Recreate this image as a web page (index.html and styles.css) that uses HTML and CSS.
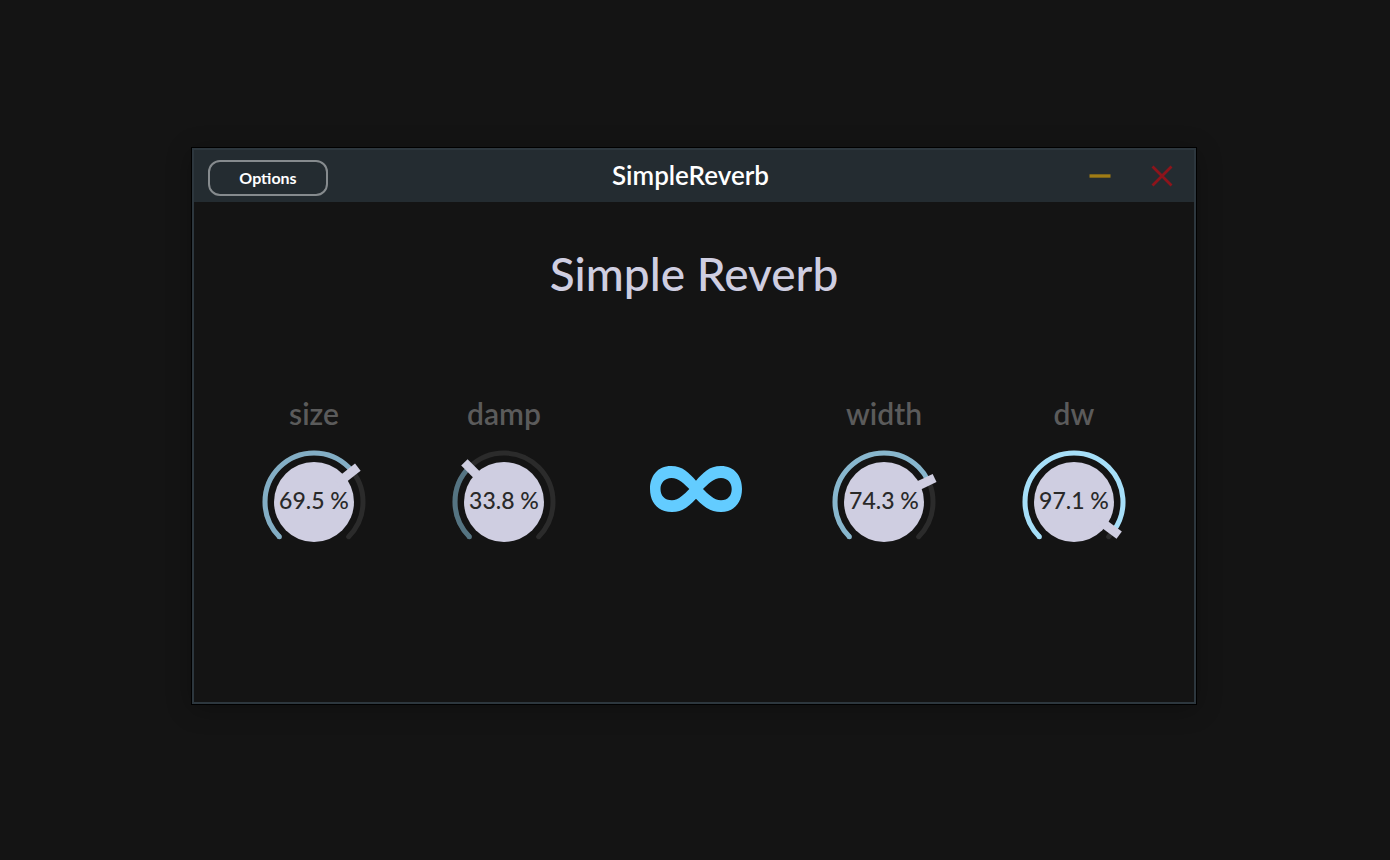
FILE: index.html
```html
<!DOCTYPE html>
<html lang="en">
<head>
<meta charset="utf-8">
<title>SimpleReverb</title>
<link rel="stylesheet" href="styles.css">
</head>
<body>
<main class="window">
  <header class="titlebar">
    <button class="options" type="button">Options</button>
    <h1 class="window-title">SimpleReverb</h1>
    <div class="window-actions">
      <button class="action" type="button" aria-label="Minimize">
        <svg width="22" height="22" viewBox="0 0 22 22"><path d="M0.5 11H21.5" stroke="#a07c15" stroke-width="3.4"/></svg>
      </button>
      <button class="action" type="button" aria-label="Close">
        <svg width="22" height="22" viewBox="0 0 22 22"><path d="M1.5 1.5L20.5 20.5M20.5 1.5L1.5 20.5" stroke="#8d141b" stroke-width="2.8"/></svg>
      </button>
    </div>
  </header>
  <section class="panel">
    <h2 class="plugin-name">Simple Reverb</h2>
    <div class="controls">
      <div class="control">
        <span class="label">size</span>
        <div class="knob">
          <svg class="dial" viewBox="0 0 120 120">
            <path class="track" d="M25.35 94.65A49 49 0 1 1 94.65 94.65"/>
            <g transform="rotate(-135 60 60)"><circle class="arc arc-size" cx="60" cy="60" r="49" pathLength="360" stroke-dasharray="186.5 360" transform="rotate(-90 60 60)"/></g>
            <circle class="cap arc-size-fill" cx="25.35" cy="94.65" r="2.5"/>
            <circle class="face" cx="60" cy="60" r="40"/>
            <rect class="face" x="55.5" y="4" width="9" height="26" transform="rotate(51.5 60 60)"/>
          </svg>
          <output class="value">69.5 %</output>
        </div>
      </div>
      <div class="control">
        <span class="label">damp</span>
        <div class="knob">
          <svg class="dial" viewBox="0 0 120 120">
            <path class="track" d="M25.35 94.65A49 49 0 1 1 94.65 94.65"/>
            <g transform="rotate(-135 60 60)"><circle class="arc arc-damp" cx="60" cy="60" r="49" pathLength="360" stroke-dasharray="90 360" transform="rotate(-90 60 60)"/></g>
            <circle class="cap arc-damp-fill" cx="25.35" cy="94.65" r="2.5"/>
            <circle class="face" cx="60" cy="60" r="40"/>
            <rect class="face" x="55.5" y="4" width="9" height="26" transform="rotate(-45 60 60)"/>
          </svg>
          <output class="value">33.8 %</output>
        </div>
      </div>
      <div class="control control-freeze">
        <button class="freeze" type="button" aria-label="Freeze">
          <svg width="92" height="46" viewBox="0 0 92 46"><path fill="#63ccff" fill-rule="evenodd" d="M46 14.700C53 7 59 0 71 0C84.500 0 92 10 92 23C92 36 84.500 46 71 46C60 46 53 40 46 32.700C39 40 33 46 22 46C7.500 46 0 36 0 23C0 10 7.500 0 21 0C33 0 39 7 46 14.700ZM39.300 23C35 18.500 28.500 12 21.500 12C14.500 12 10.500 17 10.500 23C10.500 29.500 14.500 34.300 22 34.300C28.500 34.300 35 27.500 39.300 23ZM53 23C57.500 27.500 64 34.300 71 34.300C78 34.300 81.700 29.500 81.700 23C81.700 17 78 12 71 12C64 12 57.500 18.500 53 23Z"/></svg>
        </button>
      </div>
      <div class="control">
        <span class="label">width</span>
        <div class="knob">
          <svg class="dial" viewBox="0 0 120 120">
            <path class="track" d="M25.35 94.65A49 49 0 1 1 94.65 94.65"/>
            <g transform="rotate(-135 60 60)"><circle class="arc arc-width" cx="60" cy="60" r="49" pathLength="360" stroke-dasharray="199.4 360" transform="rotate(-90 60 60)"/></g>
            <circle class="cap arc-width-fill" cx="25.35" cy="94.65" r="2.5"/>
            <circle class="face" cx="60" cy="60" r="40"/>
            <rect class="face" x="55.5" y="4" width="9" height="26" transform="rotate(64.6 60 60)"/>
          </svg>
          <output class="value">74.3 %</output>
        </div>
      </div>
      <div class="control">
        <span class="label">dw</span>
        <div class="knob">
          <svg class="dial" viewBox="0 0 120 120">
            <path class="track" d="M25.35 94.65A49 49 0 1 1 94.65 94.65"/>
            <g transform="rotate(-135 60 60)"><circle class="arc arc-dw" cx="60" cy="60" r="49" pathLength="360" stroke-dasharray="261 360" transform="rotate(-90 60 60)"/></g>
            <circle class="cap arc-dw-fill" cx="25.35" cy="94.65" r="2.5"/>
            <circle class="face" cx="60" cy="60" r="40"/>
            <rect class="face" x="55.5" y="4" width="9" height="26" transform="rotate(126.2 60 60)"/>
          </svg>
          <output class="value">97.1 %</output>
        </div>
      </div>
    </div>
  </section>
</main>
</body>
</html>
```
FILE: styles.css
```css
* { box-sizing: border-box; }

body {
  margin: 0;
  padding: 148px 194px 156px 192px;
  background: #141414;
  font-family: "Lato Medium", Lato, "Open Sans", sans-serif;
  font-weight: 600;
}

button {
  font: inherit;
  background: none;
  border: 0;
  padding: 0;
  cursor: pointer;
}

svg { display: block; }

.window {
  background: #141414;
  border: 2px solid #2d373e;
  box-shadow: 0 0 0 1px #000, 0 4px 24px rgba(0, 0, 0, 0.3);
}

.titlebar {
  display: grid;
  grid-template-columns: 1fr auto 1fr;
  align-items: center;
  height: 52px;
  padding: 0 21px 0 14px;
  background: #242c31;
}

.options {
  width: 120px;
  height: 36px;
  margin-top: 4px;
  padding-bottom: 2px;
  border: 2px solid #868b8e;
  border-radius: 12px;
  color: #fff;
  font-family: Lato, "Open Sans", sans-serif;
  font-size: 16px;
  font-weight: 700;
}

.window-title {
  margin: 0;
  padding-bottom: 2px;
  color: #fff;
  font-family: Lato, "Open Sans", sans-serif;
  font-size: 26px;
  font-weight: 600;
  line-height: 32px;
}

.window-actions {
  display: flex;
  justify-content: flex-end;
  gap: 40px;
}

.panel { padding: 42px 25px 140px; }

.plugin-name {
  margin: 0;
  color: #cfcee1;
  font-size: 46px;
  font-weight: 600;
  line-height: 60px;
  text-align: center;
}

.controls {
  display: grid;
  grid-template-columns: repeat(5, 1fr);
  margin-top: 88px;
}

.control {
  display: flex;
  flex-direction: column;
  align-items: center;
  gap: 8px;
}

.label {
  color: #5b5b5b;
  font-family: Lato, "Open Sans", sans-serif;
  font-size: 30px;
  font-weight: 600;
  line-height: 42px;
}

.knob {
  display: grid;
  place-items: center;
  width: 120px;
  height: 120px;
}

.dial, .value { grid-area: 1 / 1; }
.dial { width: 120px; height: 120px; }

.value {
  padding-bottom: 4px;
  color: #292929;
  font-size: 23px;
  line-height: 30px;
}

.track { fill: none; stroke: #2b2b2b; stroke-width: 5; stroke-linecap: round; }
.arc { fill: none; stroke-width: 5; }
.face { fill: #cfcee1; }

.arc-size { stroke: #83aec5; }
.arc-size-fill { fill: #83aec5; }
.arc-damp { stroke: #557482; }
.arc-damp-fill { fill: #557482; }
.arc-width { stroke: #88b7ce; }
.arc-width-fill { fill: #88b7ce; }
.arc-dw { stroke: #a6dff9; }
.arc-dw-fill { fill: #a6dff9; }

.control-freeze { padding: 74px 0 0 4px; }
```
